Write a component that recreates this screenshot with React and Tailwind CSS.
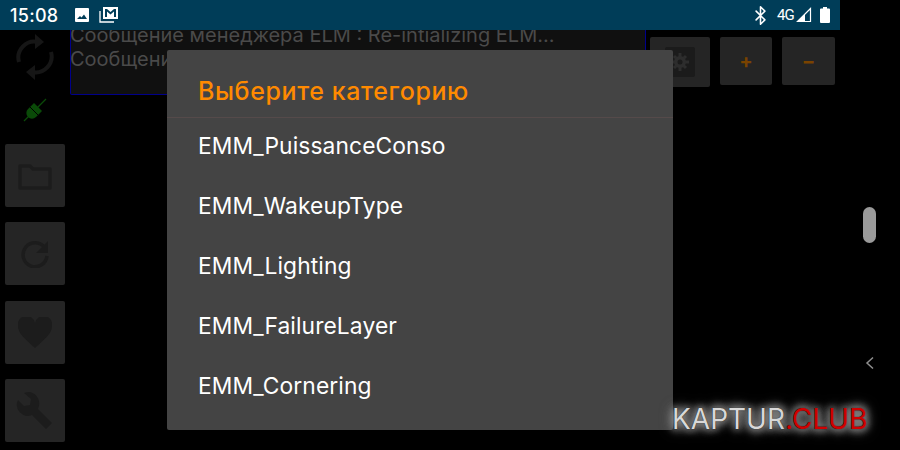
import { Bluetooth } from 'lucide-react'

const font = { fontFamily: 'Inter, sans-serif' }
const categories = ['EMM_PuissanceConso', 'EMM_WakeupType', 'EMM_Lighting', 'EMM_FailureLayer', 'EMM_Cornering']

function SideButton({ children }) {
  return (
    <div className="w-[60px] h-[63px] rounded-[2px] bg-[#252525] flex items-center justify-center">
      {children}
    </div>
  )
}

function StatusBar() {
  return (
    <div className="h-[30px] shrink-0 bg-[#003d58] flex items-center pl-[10px] pr-[10px] text-white">
      <span className="text-[18px] font-medium tracking-[0.3px]">15:08</span>
      <svg className="ml-[15px]" width="16" height="16" viewBox="0 0 16 16">
        <path fill="#fff" fillRule="evenodd" d="M2 1h12a1 1 0 0 1 1 1v12a1 1 0 0 1-1 1H2a1 1 0 0 1-1-1V2a1 1 0 0 1 1-1zm1 11h10L10 7.500 7.500 10.500 6 9z" />
      </svg>
      <svg className="ml-[9px]" width="20" height="18" viewBox="0 0 20 18">
        <path fill="none" stroke="#fff" strokeWidth="1.300" d="M1 5v11h14" />
        <path fill="#fff" fillRule="evenodd" d="M4 1h15v12H4zM6 3v8h2V5.500l3.500 3 3.500-3V11h2V3h-2l-3.500 3L8 3z" />
      </svg>
      <div className="ml-auto flex items-center">
        <Bluetooth size={21} color="#fff" strokeWidth={1.800} />
        <span className="ml-[6px] text-[15px] tracking-[-0.8px] font-['Roboto',sans-serif]">4G</span>
        <svg className="ml-[2px]" width="16" height="16" viewBox="0 0 16 16">
          <path fill="none" stroke="#fff" strokeWidth="1.200" d="M14.500 1.500v13H1.500z" />
          <path fill="#fff" d="M9 7v8H1z" />
        </svg>
        <svg className="ml-[8px]" width="10" height="16" viewBox="0 0 10 16">
          <path fill="#fff" d="M3 0h4v1.500h2a1 1 0 0 1 1 1V15a1 1 0 0 1-1 1H1a1 1 0 0 1-1-1V2.500a1 1 0 0 1 1-1h2z" />
        </svg>
      </div>
    </div>
  )
}

function LeftColumn() {
  const ic = '#1c1c1c'
  const sync = '#161616'
  return (
    <div className="w-[60px] ml-[5px] shrink-0 flex flex-col items-center">
      <svg className="mt-[3px]" width="38" height="48" viewBox="0 0 38 48">
        <path fill="none" stroke={sync} strokeWidth="4" d="M3 29A16 16 0 0 1 22 9M35 19A16 16 0 0 1 16 39" />
        <path fill={sync} d="M19 1l9 8-9 7zM19 32l-9 7 9 8z" />
      </svg>
      <svg className="mt-[17px]" width="24" height="24" viewBox="0 0 24 24">
        <path stroke="#0a4a08" strokeWidth="1.200" d="M1 23l22-22" />
        <path fill="#0a4a08" d="M5 11l6-6 8 8-6 6a5.500 5.500 0 0 1-8-8z" />
        <path stroke="#000" strokeWidth="1" d="M5 7l12 12" />
      </svg>
      <div className="mt-[22px] flex flex-col gap-[15.330px]">
        <SideButton>
          <svg width="34" height="28" viewBox="0 0 34 28">
            <path fill="none" stroke={ic} strokeWidth="3.500" d="M2 4h10l3 3h17v19H2z" strokeLinejoin="round" />
          </svg>
        </SideButton>
        <SideButton>
          <svg width="28" height="28" viewBox="0 0 28 28">
            <path fill="none" stroke={ic} strokeWidth="3.500" d="M24 8a12 12 0 1 0 2 8" />
            <path fill={ic} d="M27 1v12H15z" />
          </svg>
        </SideButton>
        <SideButton>
          <svg width="34" height="31" viewBox="0 0 34 31">
            <path fill={ic} d="M17 31C6 21 0 16 0 9a8.500 8.500 0 0 1 17-3 8.500 8.500 0 0 1 17 3c0 7-6 12-17 22z" />
          </svg>
        </SideButton>
        <SideButton>
          <svg width="38" height="38" viewBox="0 0 38 38">
            <path fill={ic} d="M14 1a12 12 0 0 0-6 1l7 6-1 6-6 1-6-6a11 11 0 0 0 14 15l14 14 6-6-14-14A12 12 0 0 0 14 1z" />
          </svg>
        </SideButton>
      </div>
    </div>
  )
}

function TopButton({ width, height, children }) {
  return (
    <div className={`${width} ${height} rounded-[2px] bg-[#252525] flex items-center justify-center shrink-0`}>
      {children}
    </div>
  )
}

export default function App() {
  return (
    <div className="relative w-[900px] h-[450px] overflow-hidden bg-black flex" style={font}>
      <div className="w-[840px] h-full flex flex-col shrink-0">
        <StatusBar />
        <div className="flex flex-1">
          <LeftColumn />
          <div className="ml-[5px] w-[576px] h-[65px] bg-[#101010] border border-t-0 border-[#00008b] rounded-b-[2px] overflow-hidden shrink-0">
            <div className="-mt-[7px] -ml-px text-[#4a4a4a] text-[20px] leading-[24px] whitespace-nowrap">
              <div>Сообщение менеджера ELM : Re-intializing ELM...</div>
              <div>Сообщение</div>
            </div>
          </div>
          <div className="ml-[4px] mt-[7px] flex items-start">
            <TopButton width="w-[60px]" height="h-[50px]">
              <svg width="30" height="30" viewBox="0 0 30 30">
                <rect width="30" height="30" rx="2" fill="#1b1b1b" />
                <path stroke="#2d2d2d" strokeWidth="3" d="M15 6v18M6 15h18M9 9l12 12M21 9L9 21" />
                <circle cx="15" cy="15" r="6" fill="#2d2d2d" />
                <circle cx="15" cy="15" r="2.500" fill="#1b1b1b" />
              </svg>
            </TopButton>
            <div className="ml-[10px]">
              <TopButton width="w-[52px]" height="h-[48px]">
                <span className="text-[#7a4300] text-[20px] font-bold">+</span>
              </TopButton>
            </div>
            <div className="ml-[10px]">
              <TopButton width="w-[53px]" height="h-[48px]">
                <span className="text-[#7a4300] text-[20px] font-bold">−</span>
              </TopButton>
            </div>
          </div>
        </div>
      </div>
      <div className="w-[60px] relative">
        <div className="absolute left-[23px] top-[207px] w-[13px] h-[36px] rounded-full bg-[#9a9a9a]" />
        <svg className="absolute left-[25px] top-[356px]" width="10" height="14" viewBox="0 0 10 14">
          <path fill="none" stroke="#8f8f8f" strokeWidth="1.500" d="M8 1.500L2 7l6 5.500" />
        </svg>
      </div>

      {/* Dialog */}
      <div className="absolute left-[167px] top-[50px] w-[506px] h-[380px] rounded-[2px] bg-[#444444] overflow-hidden">
        <div className="h-[68px] pl-[31px] flex items-center border-b border-[#554a4a]">
          <span className="text-[#ff8a00] text-[25px] tracking-[0.6px] font-medium pt-[16px]">Выберите категорию</span>
        </div>
        {categories.map((c) => (
          <div key={c} className="h-[60px] pl-[31px] pb-[4px] flex items-center text-white text-[22.800px] tracking-[0.1px]">{c}</div>
        ))}
      </div>

      {/* Watermark */}
      <div className="absolute left-[672px] top-[403px] text-[28px] leading-[32px] whitespace-nowrap [text-shadow:0_0_1px_#000,0_0_6px_#888,0_0_8px_#888,0_0_10px_#888,0_0_14px_#888,0_0_14px_#777]">
        <span className="text-[#d8d8d8]">KAPTUR</span>
        <span className="text-[#d00000]">.CLUB</span>
      </div>
    </div>
  )
}
